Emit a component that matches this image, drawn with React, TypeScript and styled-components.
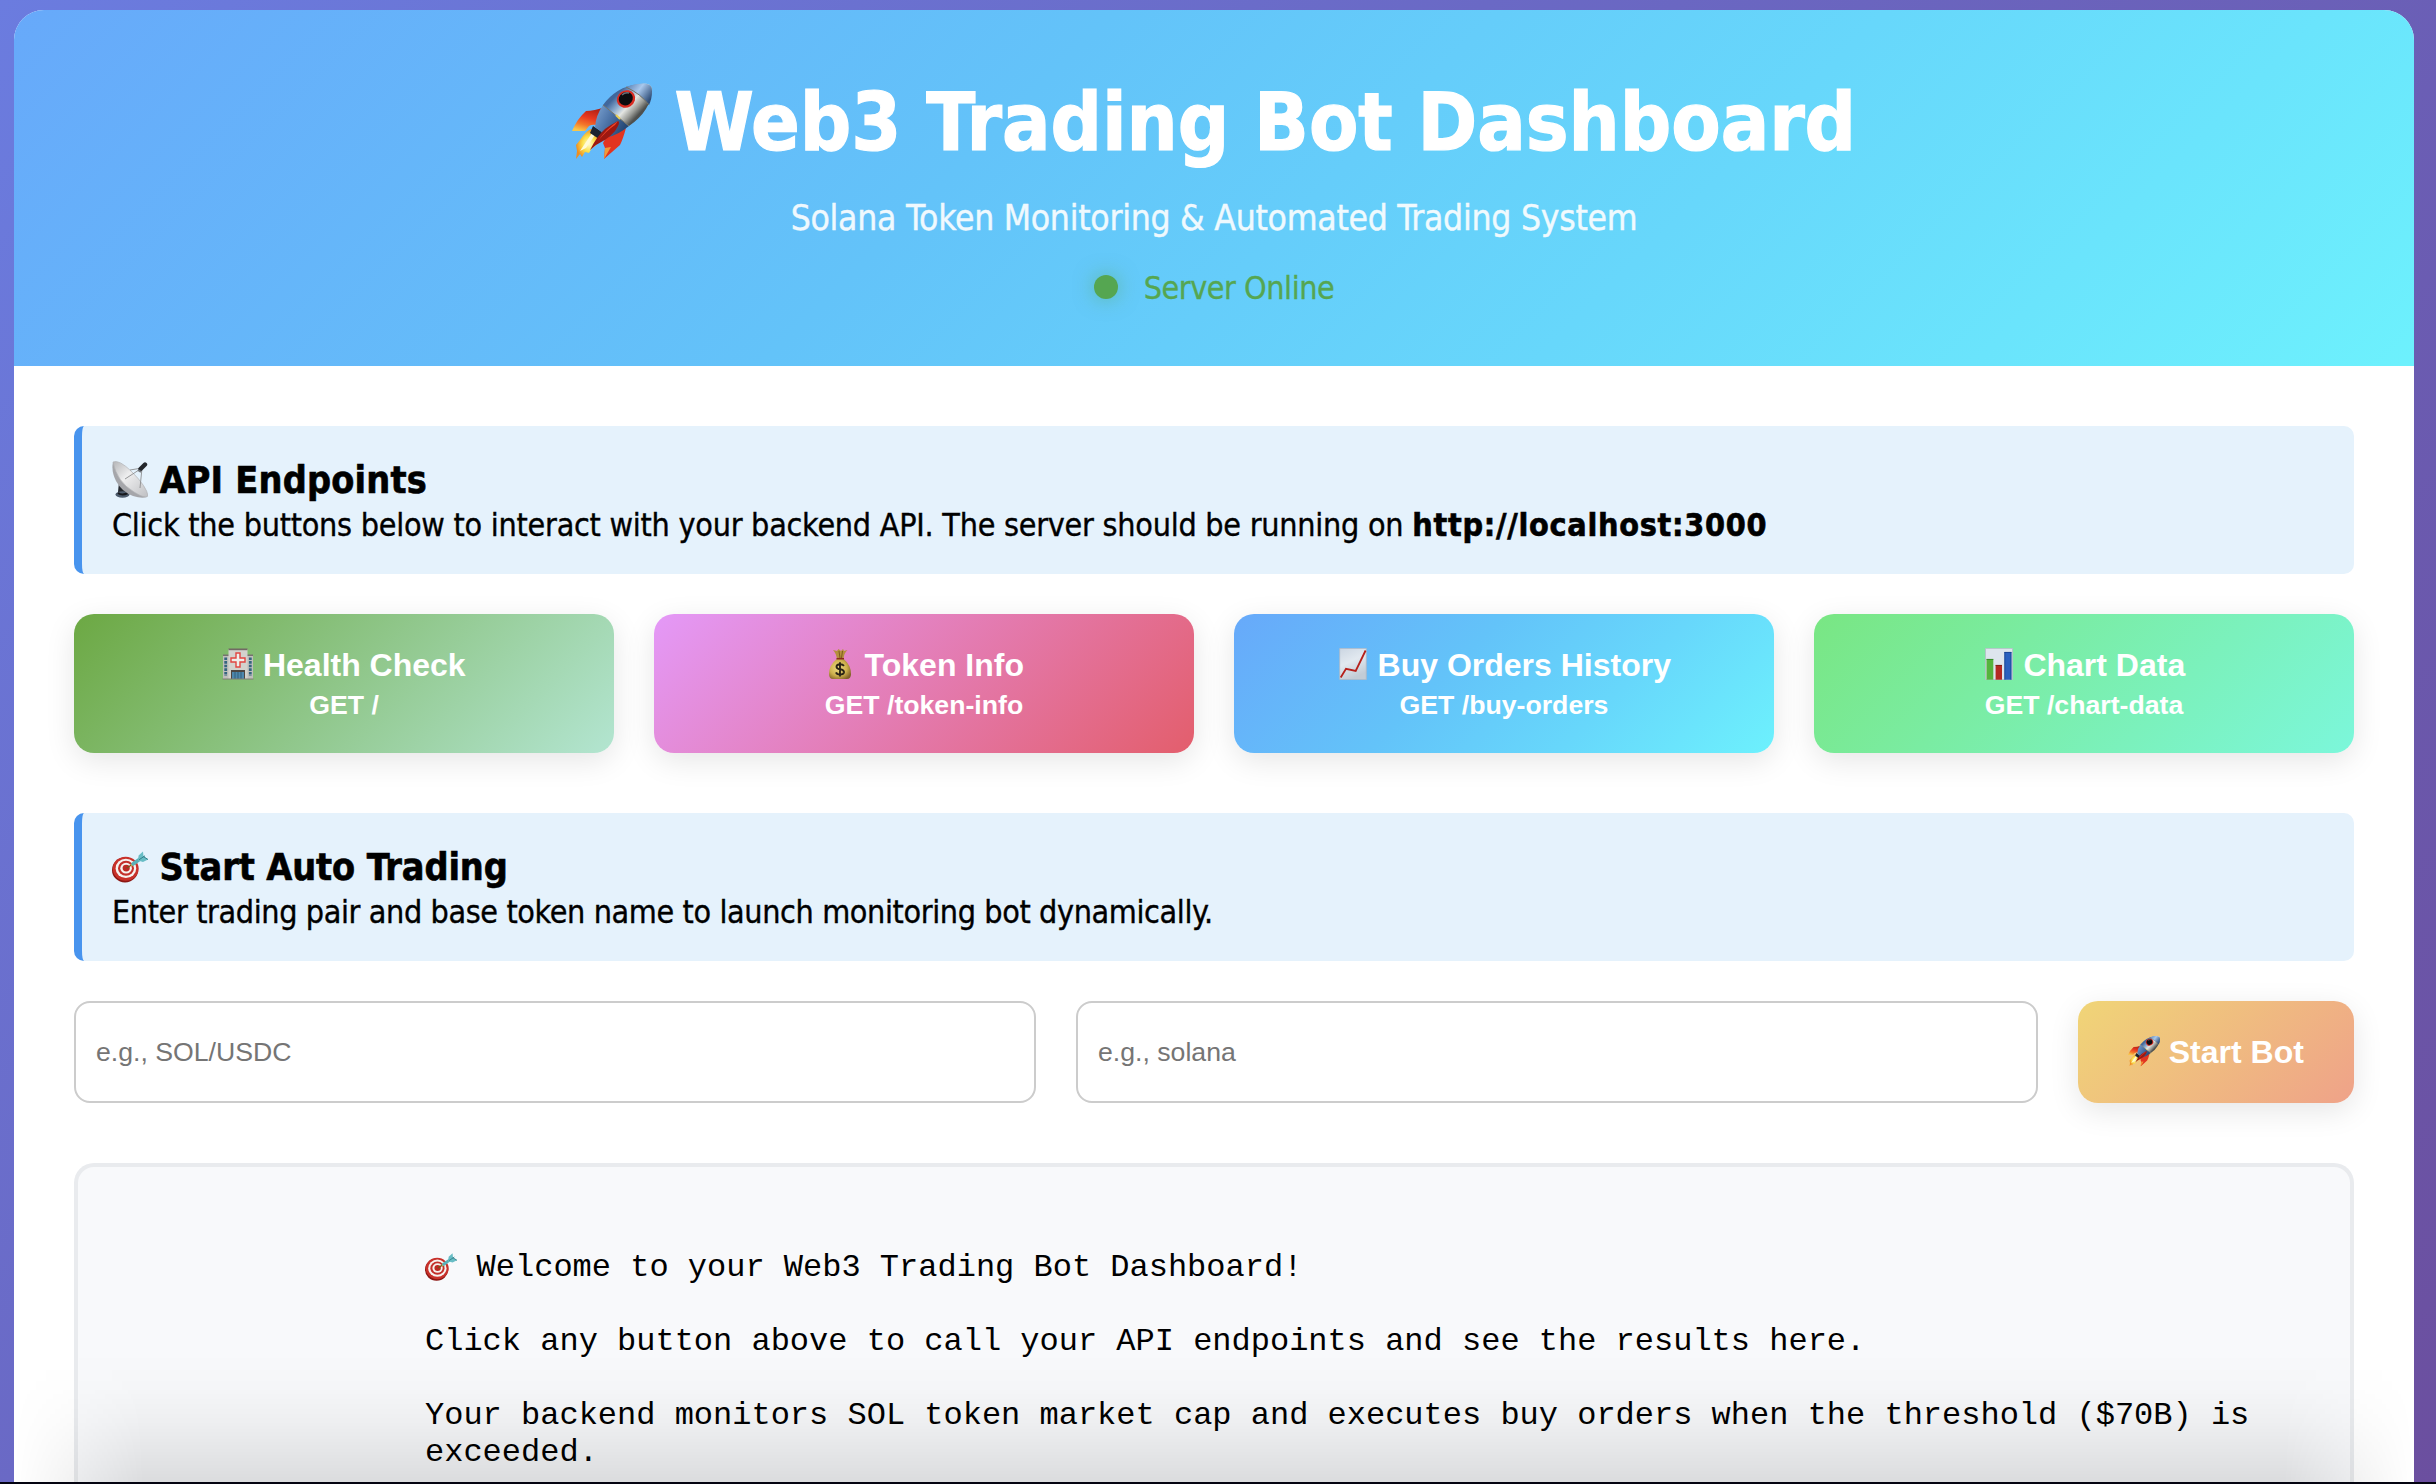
import React from 'react';
import styled, { createGlobalStyle } from 'styled-components';

const ui = '"DejaVu Sans Condensed", "DejaVu Sans", sans-serif';
const control = '"Liberation Sans", Arial, sans-serif';
const sky = '#67a9fa 0%, #63c3f9 40%, #67d7fb 68%, #6df1fd 100%';

const GlobalStyle = createGlobalStyle`
  * { box-sizing: border-box; margin: 0; padding: 0; }
  body {
    height: 1484px;
    overflow: hidden;
    padding: 10px 14px 0;
    background: linear-gradient(135deg, #6b7cdf 0%, #6a69c5 38%, #6b4f9f 100%);
    font-family: ${ui};
    font-stretch: condensed;
    color: #000;
  }
`;

const Card = styled.div`
  width: 2400px;
  height: 1474px;
  overflow: hidden;
  border-radius: 30px 30px 0 0;
  background: #fff;
`;

const Header = styled.header`
  display: flex;
  flex-direction: column;
  align-items: center;
  height: 356px;
  padding-top: 64px;
  color: #fff;
  background: linear-gradient(135deg, ${sky});
`;

const Title = styled.h1`
  display: flex;
  gap: 22.6px;
  font-size: 80px;
  line-height: 97px;
  letter-spacing: -0.06px;
  white-space: nowrap;
  -webkit-text-stroke: 1.2px #fff;

  svg { width: 80px; height: 76px; margin-top: 9px; }
`;

const Subtitle = styled.p`
  margin-top: 26px;
  font-size: 35.2px;
  line-height: 42px;
  letter-spacing: -0.27px;
  opacity: 0.9;
  -webkit-text-stroke: 0.4px #fff;
`;

const Status = styled.div`
  display: flex;
  align-items: center;
  gap: 26px;
  margin-top: 30px;
  font-size: 32px;
  line-height: 38px;
  letter-spacing: -0.45px;
  color: #55a651;
  -webkit-text-stroke: 0.3px #55a651;
`;

const StatusDot = styled.span`
  width: 24px;
  height: 24px;
  margin-bottom: 2px;
  border-radius: 50%;
  background: #55a651;
  box-shadow: 0 0 20px rgba(85, 166, 81, 0.5);
`;

const Content = styled.main`
  padding: 60px 60px 0;
`;

const InfoPanel = styled.section`
  height: 148px;
  padding: 30px 30px 0;
  border-left: 8px solid #4894ee;
  border-radius: 10px;
  background: #e5f2fc;
  -webkit-text-stroke: 0.35px #000;
`;

const InfoTitle = styled.h3<{ $spacing: string }>`
  display: flex;
  gap: 11.5px;
  font-size: 37.44px;
  line-height: 48px;
  letter-spacing: ${(p) => p.$spacing};
  -webkit-text-stroke: 0.6px #000;

  svg { width: 36px; height: 38px; margin-top: 5px; }
`;

const InfoText = styled.p<{ $spacing: string }>`
  font-size: 32px;
  line-height: 43px;
  letter-spacing: ${(p) => p.$spacing};

  strong { letter-spacing: 0.72px; -webkit-text-stroke: 0.6px #000; }
`;

const ButtonGrid = styled.div`
  display: grid;
  grid-template-columns: repeat(4, 1fr);
  gap: 40px;
  margin: 40px 0 60px;
`;

const ActionButton = styled.button<{ $stops: string }>`
  display: flex;
  flex-direction: column;
  align-items: center;
  height: 139px;
  padding-top: 31px;
  border: 0;
  border-radius: 20px;
  color: #fff;
  font-family: ${control};
  font-weight: 700;
  background: linear-gradient(135deg, ${(p) => p.$stops});
  box-shadow: 0 8px 30px rgba(0, 0, 0, 0.1);
`;

const ButtonLabel = styled.span`
  display: flex;
  gap: 8.6px;
  font-size: 32px;
  line-height: 40px;
  white-space: nowrap;

  svg { width: 32px; height: 32px; margin-top: 3px; }
`;

const ButtonPath = styled.small`
  font-size: 26.67px;
  line-height: 41px;
`;

const BotForm = styled.form`
  display: grid;
  grid-template-columns: 1fr 1fr 276px;
  gap: 40px;
  margin: 40px 0 60px;
`;

const Field = styled.input`
  min-width: 0;
  height: 102px;
  padding: 0 20px;
  border: 2px solid #ccc;
  border-radius: 16px;
  background: #fff;
  font-family: ${control};
  font-size: 26.67px;

  &::placeholder { color: #757575; opacity: 1; }
`;

const StartButton = styled(ActionButton)`
  height: 102px;
`;

const ResultPanel = styled.section`
  height: 321px;
  padding: 82px 36px 0 347px;
  border: 4px solid #e9ebee;
  border-bottom: 0;
  border-radius: 20px 20px 0 0;
  background: #f8f9fb;
  font-family: "Liberation Mono", "Courier New", monospace;
  font-size: 32px;
  line-height: 37px;
`;

const ResultLine = styled.p`
  display: flex;
  gap: 19.6px;

  & + & { margin-top: 37px; }
  svg { width: 32px; height: 28px; margin-top: 4px; }
`;

const EdgeShadow = styled.div`
  position: fixed;
  left: 14px;
  right: 22px;
  bottom: 2px;
  height: 130px;
  background: linear-gradient(
    to top,
    rgba(0, 0, 0, 0.115) 0%,
    rgba(0, 0, 0, 0.08) 22%,
    rgba(0, 0, 0, 0.04) 47%,
    rgba(0, 0, 0, 0.012) 73%,
    rgba(0, 0, 0, 0) 100%
  );
  mask-image: linear-gradient(to right, transparent, #000 130px, #000 calc(100% - 130px), transparent);
`;

const ScreenEdge = styled.div`
  position: fixed;
  left: 0;
  right: 0;
  bottom: 0;
  height: 2px;
  background: #030310;
`;

const Rocket = () => (
  <svg viewBox="0 0 80 76" aria-hidden="true">
    <defs>
      <linearGradient id="hull" x1="0.25" y1="0.3" x2="0.75" y2="0.7">
        <stop offset="0" stopColor="#41679b" />
        <stop offset="0.3" stopColor="#8caccf" />
        <stop offset="0.55" stopColor="#e4e6e2" />
        <stop offset="0.8" stopColor="#9b9d98" />
        <stop offset="1" stopColor="#4e504e" />
      </linearGradient>
      <linearGradient id="tail" x1="0" y1="0" x2="1" y2="0.5">
        <stop offset="0" stopColor="#7ea5d3" />
        <stop offset="0.5" stopColor="#4d74a8" />
        <stop offset="1" stopColor="#244774" />
      </linearGradient>
      <linearGradient id="nose" x1="0" y1="0" x2="1" y2="0.6">
        <stop offset="0" stopColor="#5379ae" />
        <stop offset="0.5" stopColor="#a9c8ec" />
        <stop offset="1" stopColor="#304e78" />
      </linearGradient>
      <linearGradient id="fin" x1="0.7" y1="0" x2="0.3" y2="1">
        <stop offset="0" stopColor="#a81d14" />
        <stop offset="0.45" stopColor="#e83820" />
        <stop offset="0.75" stopColor="#f4772a" />
        <stop offset="1" stopColor="#f9c64a" />
      </linearGradient>
      <radialGradient id="flame">
        <stop offset="0" stopColor="#fffbd0" />
        <stop offset="0.5" stopColor="#fbe14b" />
        <stop offset="1" stopColor="#ee8d22" />
      </radialGradient>
    </defs>
    <path d="M14 28 Q22 28 33 24 L25 42 Q20 41 17 43 L13 48 L0 48 Q5 36 14 28Z" fill="url(#fin)" />
    <path d="M54 45 Q51 56 48 62 L32 76 L33 65 L31 60 L36 51Z" fill="#e23420" />
    <path d="M33 65 L39 64 L32 76Z" fill="#f19a38" />
    <path d="M19 46 L30 52 Q27 62 20 65 L17 70 L13 69 L10 74 L8 71 L4 76 L5 68 L4 62 L8 57 Q13 49 19 46Z" fill="url(#flame)" />
    <path d="M20 50 L23 52 L14 65 L8 68Z" fill="#fffbd6" />
    <path d="M21 43 L30 49 L27 56 L18 50Z" fill="#1c2430" />
    <path d="M31 22 L57 43 Q46 52 36 54 L23 44 Q24 32 31 22Z" fill="url(#tail)" />
    <path d="M31 22 Q44 4 66 1 Q79 -1 80 6 Q79 28 57 43Z" fill="url(#hull)" />
    <path d="M54 4 Q66 0 75 1 Q80 2 80 8 Q80 16 77 22Q68 11 54 4Z" fill="url(#nose)" />
    <path d="M31 22 L57 43 M54 4 Q69 11 77 22" fill="none" stroke="#777466" strokeWidth="1" />
    <path d="M44 32 L48 36" stroke="#e7cf54" strokeWidth="2" />
    <ellipse cx="54" cy="16" rx="9.5" ry="8.5" fill="#d92c22" transform="rotate(-32 54 16)" />
    <ellipse cx="54" cy="15.6" rx="7.3" ry="6.5" fill="#0b0c0f" transform="rotate(-32 54 16)" />
    <path d="M50 12 Q53 9 57 10" fill="none" stroke="#667078" strokeWidth="1.4" />
    <path d="M46 38 Q48 39 46 43 Q42 53 24 62 L18 67 Q25 53 33 46 Q40 41 46 38Z" fill="#9d1811" />
    <path d="M46 38 L43 42 Q34 48 26 58 Q34 46 46 38Z" fill="#ef4327" />
  </svg>
);

const Dish = () => (
  <svg viewBox="0 0 36 38" aria-hidden="true">
    <defs>
      <linearGradient id="dish" x1="0" y1="0" x2="1" y2="1">
        <stop offset="0" stopColor="#b4b5b7" />
        <stop offset="0.4" stopColor="#eeeeef" />
        <stop offset="1" stopColor="#bfc0c3" />
      </linearGradient>
    </defs>
    <path d="M7 21 L16 28 L15 33 L6 31Z" fill="#25292e" />
    <ellipse cx="10.5" cy="33.5" rx="7" ry="3.2" fill="#4c5b6c" />
    <path d="M6 32 Q10 35 16 32" stroke="#17191d" strokeWidth="2" fill="none" />
    <path d="M1 1 Q-1 10 4 20 Q10 31 21 35 Q30 38 35 36Z" fill="#a5a6aa" />
    <path d="M1 1 Q7 -2 20 11 Q35 26 36 35 Q33 38 22 31 Q5 21 1 1Z" fill="url(#dish)" stroke="#b0b1b4" strokeWidth="0.7" />
    <path d="M30 7 L13 18 M30 7 L28 27 M30 7 L18 9" stroke="#8c8d8f" strokeWidth="0.9" />
    <path d="M28.5 8 L33 3.5" stroke="#23262b" strokeWidth="4.4" strokeLinecap="round" />
    <path d="M26 9 L29 11" stroke="#72757a" strokeWidth="2" />
  </svg>
);

const Target = () => (
  <svg viewBox="0 0 36 31" aria-hidden="true">
    <ellipse cx="13" cy="18.4" rx="13" ry="12.6" fill="#8c1713" />
    <ellipse cx="13.7" cy="17.2" rx="13" ry="12" fill="#c8312a" />
    <ellipse cx="13.9" cy="16.9" rx="10.3" ry="9.7" fill="#f6f2ef" />
    <ellipse cx="14" cy="16.8" rx="8" ry="7.5" fill="#c4302a" />
    <ellipse cx="14.1" cy="16.7" rx="5.8" ry="5.4" fill="#f6f2ef" />
    <ellipse cx="14.2" cy="16.6" rx="3.6" ry="3.4" fill="#bd2923" />
    <path d="M14.5 16.5 L22 12" stroke="#77551b" strokeWidth="1.4" />
    <path d="M19 14 L22 12" stroke="#d7a536" strokeWidth="2.2" />
    <path d="M21 12.5 L28 7.5" stroke="#58b1b9" strokeWidth="3.4" strokeLinecap="round" />
    <path d="M26 9 L26.6 4 L31 0 L31.5 5 L36 8 L31 10.4Z" fill="#68bdc5" />
    <path d="M27 8.3 L33 4.3 M31.3 5 L36 8" stroke="#2f7e89" strokeWidth="1" />
  </svg>
);

const Hospital = () => (
  <svg viewBox="0 0 32 32" aria-hidden="true">
    <path d="M1 7H31V31H1Z" fill="#bfbfbb" />
    <path d="M1 6.5H31V8H1Z" fill="#77736f" />
    <path d="M6.5 1H25.5V31H6.5Z" fill="#d3d2cd" />
    <path d="M6.5 0.5H25.5V2.2H6.5Z" fill="#716963" />
    <path d="M3.7 9.5V28 M28.3 9.5V28" stroke="#35647f" strokeWidth="2.8" strokeDasharray="2.6 1" />
    <path d="M9 22H23V31H9Z" fill="#4c4642" />
    <path d="M10 24H22V31H10Z" fill="#4d87ad" />
    <path d="M13 24V31M16 24V31M19 24V31" stroke="#254d69" strokeWidth="0.7" />
    <path d="M14 5H18V10H23V14H18V19H14V14H9V10H14Z" fill="#efeeea" stroke="#e14540" strokeWidth="1.4" />
    <path d="M0.5 31H31.5" stroke="#807d77" />
  </svg>
);

const MoneyBag = () => (
  <svg viewBox="0 0 32 32" aria-hidden="true">
    <defs>
      <radialGradient id="bag" cx="0.42" cy="0.45" r="0.65">
        <stop offset="0" stopColor="#f0dd84" />
        <stop offset="0.6" stopColor="#cdb04c" />
        <stop offset="1" stopColor="#806026" />
      </radialGradient>
    </defs>
    <path d="M13 11 Q12 5 9 2 L13 3 L14.5 1 L17 3 L19 1 L20 3 L23.5 2 Q20 5 19.5 11Z" fill="#b5903d" />
    <path d="M15 3 L16 10 M18.5 3 L17.5 10" stroke="#755319" strokeWidth="0.9" />
    <path d="M12.8 11 H19.7 Q27 17 27 26 Q27 31 23 31 H9 Q5 31 5 26 Q5 17 12.8 11Z" fill="url(#bag)" />
    <path d="M12.5 10.7 H20" stroke="#8b2b1c" strokeWidth="1.5" />
    <path d="M20 17.8 Q18.8 16.3 16 16.3 Q12.5 16.5 12.5 18.8 Q12.5 20.8 16 21.3 Q20.2 22 20 24.4 Q19.6 26.6 16 26.6 Q12.8 26.5 12 24.4 M16 14.3 V28.6" fill="none" stroke="#292315" strokeWidth="1.9" />
  </svg>
);

const RisingChart = () => (
  <svg viewBox="0 0 32 32" aria-hidden="true">
    <defs>
      <linearGradient id="paper" x1="0" y1="0" x2="0.4" y2="1">
        <stop offset="0" stopColor="#cbd6e2" />
        <stop offset="0.5" stopColor="#e2e9f0" />
        <stop offset="1" stopColor="#c2ccd6" />
      </linearGradient>
    </defs>
    <path d="M2.7 0.4H29.3V31.6H2.7Z" fill="url(#paper)" stroke="#aeb9c5" strokeWidth="0.8" />
    <path d="M3.7 29.5 L9 20.8 L18.7 23 L28.6 2.5" fill="none" stroke="#b6201b" strokeWidth="1.8" />
  </svg>
);

const BarChart = () => (
  <svg viewBox="0 0 32 32" aria-hidden="true">
    <path d="M2.5 0.4H29.5V31.6H2.5Z" fill="#dde5ed" stroke="#b4bdc6" strokeWidth="0.8" />
    <path d="M3.5 11H10.3V31.7H3.5Z" fill="#55b33d" />
    <path d="M12.6 17H19V31.7H12.6Z" fill="#b42a22" />
    <path d="M21.5 4H28.3V31.7H21.5Z" fill="#2a60bf" />
    <path d="M3.5 11.4H10.3" stroke="#2f7f25" strokeWidth="0.8" />
    <path d="M12.6 17.4H19" stroke="#761812" strokeWidth="0.8" />
    <path d="M21.5 4.4H28.3M28 4V31.7M21.8 4V31.7" stroke="#173f8d" strokeWidth="0.8" />
  </svg>
);

const endpoints = [
  { icon: <Hospital />, label: 'Health Check', path: 'GET /', stops: '#6ca843, #b3e5d1' },
  { icon: <MoneyBag />, label: 'Token Info', path: 'GET /token-info', stops: '#e499f8, #e35e6c' },
  { icon: <RisingChart />, label: 'Buy Orders History', path: 'GET /buy-orders', stops: sky },
  { icon: <BarChart />, label: 'Chart Data', path: 'GET /chart-data', stops: '#79e683, #7cf7db' },
];

export default function App() {
  return (
    <>
      <GlobalStyle />
      <Card>
        <Header>
          <Title><Rocket /><span>Web3 Trading Bot Dashboard</span></Title>
          <Subtitle>Solana Token Monitoring &amp; Automated Trading System</Subtitle>
          <Status><StatusDot /><span>Server Online</span></Status>
        </Header>
        <Content>
          <InfoPanel>
            <InfoTitle $spacing="0.2px"><Dish /><span>API Endpoints</span></InfoTitle>
            <InfoText $spacing="-0.25px">
              Click the buttons below to interact with your backend API. The server should be running on <strong>http://localhost:3000</strong>
            </InfoText>
          </InfoPanel>
          <ButtonGrid>
            {endpoints.map((e) => (
              <ActionButton key={e.label} $stops={e.stops}>
                <ButtonLabel>{e.icon}<span>{e.label}</span></ButtonLabel>
                <ButtonPath>{e.path}</ButtonPath>
              </ActionButton>
            ))}
          </ButtonGrid>
          <InfoPanel>
            <InfoTitle $spacing="-0.12px"><Target /><span>Start Auto Trading</span></InfoTitle>
            <InfoText $spacing="-0.38px">
              Enter trading pair and base token name to launch monitoring bot dynamically.
            </InfoText>
          </InfoPanel>
          <BotForm>
            <Field placeholder="e.g., SOL/USDC" />
            <Field placeholder="e.g., solana" />
            <StartButton type="button" $stops="#f0d577, #efa289">
              <ButtonLabel><Rocket /><span>Start Bot</span></ButtonLabel>
            </StartButton>
          </BotForm>
          <ResultPanel>
            <ResultLine><Target /><span>Welcome to your Web3 Trading Bot Dashboard!</span></ResultLine>
            <ResultLine>Click any button above to call your API endpoints and see the results here.</ResultLine>
            <ResultLine>Your backend monitors SOL token market cap and executes buy orders when the threshold ($70B) is exceeded.</ResultLine>
          </ResultPanel>
        </Content>
      </Card>
      <EdgeShadow />
      <ScreenEdge />
    </>
  );
}
